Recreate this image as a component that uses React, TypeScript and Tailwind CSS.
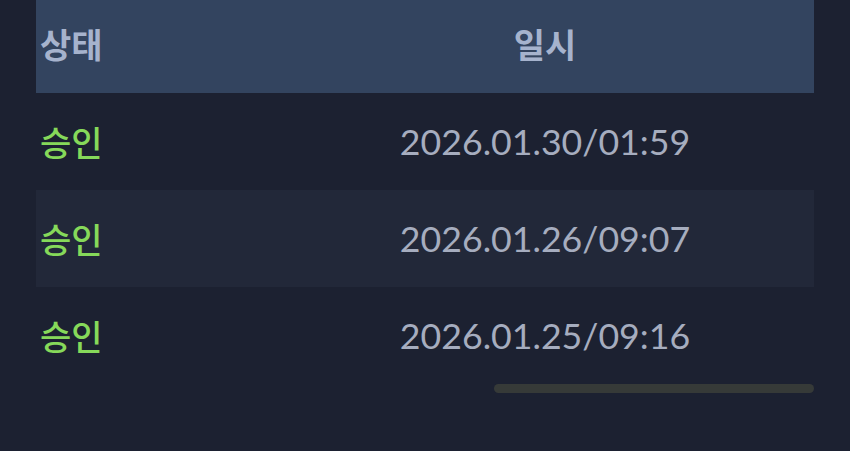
import React from "react";

const rows = [
  { status: "승인", date: "2026.01.30/01:59" },
  { status: "승인", date: "2026.01.26/09:07" },
  { status: "승인", date: "2026.01.25/09:16" },
];

export default function App() {
  return (
    <div
      className="w-[850px] h-[451px] bg-[#1c2131] overflow-hidden"
      style={{ fontFamily: '"Noto Sans CJK KR", "Noto Sans", sans-serif' }}
    >
      <div className="ml-[36px] w-[778px]">
        <div className="grid grid-cols-[240px_1fr] h-[93px] items-center bg-[#33445f] pb-[5px]">
          <div className="pl-[4px] text-[34px] font-bold text-[#a6b3cd] leading-none">상태</div>
          <div className="text-center text-[34px] font-bold text-[#a6b3cd] leading-none">일시</div>
        </div>
        {rows.map((r, i) => (
          <div
            key={i}
            className={
              "grid grid-cols-[240px_1fr] h-[97px] items-center " +
              (i === 1 ? "bg-[#222839]" : "")
            }
          >
            <div className="pl-[4px] text-[34px] font-medium text-[#86d95a] leading-none">{r.status}</div>
            <div
              className="text-center text-[35.7px] text-[#a6adbf] leading-none"
              style={{ fontFamily: 'Lato, "Open Sans", sans-serif' }}
            >
              {r.date}
            </div>
          </div>
        ))}
        <div className="flex justify-end">
          <div className="w-[320px] h-[9px] rounded-full bg-[#363a38]" />
        </div>
      </div>
    </div>
  );
}
